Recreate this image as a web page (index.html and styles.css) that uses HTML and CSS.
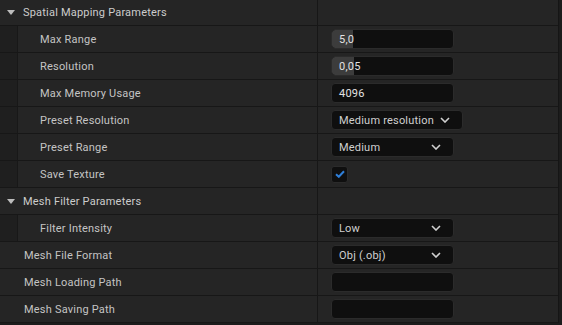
FILE: index.html
```html
<!DOCTYPE html>
<html lang="en">
<head>
  <meta charset="UTF-8" />
  <meta name="viewport" content="width=device-width, initial-scale=1.0"/>
  <title>Details</title>
  <link rel="stylesheet" href="styles.css">
</head>
<body>
  <div class="panel">
    <div class="row category">
      <div class="name"><span class="arrow"></span>Spatial Mapping Parameters</div>
      <div class="value"></div>
    </div>

    <div class="row nested">
      <div class="name"><span class="strip"></span><span class="label">Max Range</span></div>
      <div class="value">
        <div class="field number"><span class="fill" style="width: 21px"></span><span class="text">5,0</span></div>
      </div>
    </div>

    <div class="row nested">
      <div class="name"><span class="strip"></span><span class="label">Resolution</span></div>
      <div class="value">
        <div class="field number"><span class="fill" style="width: 22px"></span><span class="text">0,05</span></div>
      </div>
    </div>

    <div class="row nested">
      <div class="name"><span class="strip"></span><span class="label">Max Memory Usage</span></div>
      <div class="value">
        <div class="field"><span class="text">4096</span></div>
      </div>
    </div>

    <div class="row nested">
      <div class="name"><span class="strip"></span><span class="label">Preset Resolution</span></div>
      <div class="value">
        <div class="field combo"><span class="text">Medium resolution</span><svg class="chevron" width="10" height="6" viewBox="0 0 10 6"><path d="M1 1 L5 5 L9 1" /></svg></div>
      </div>
    </div>

    <div class="row nested">
      <div class="name"><span class="strip"></span><span class="label">Preset Range</span></div>
      <div class="value">
        <div class="field combo"><span class="text">Medium</span><svg class="chevron" width="10" height="6" viewBox="0 0 10 6"><path d="M1 1 L5 5 L9 1" /></svg></div>
      </div>
    </div>

    <div class="row nested">
      <div class="name"><span class="strip"></span><span class="label">Save Texture</span></div>
      <div class="value">
        <div class="checkbox"><svg width="10" height="8" viewBox="0 0 10 8"><path d="M1 4.2 L3.8 6.8 L9 1.2" /></svg></div>
      </div>
    </div>

    <div class="row category">
      <div class="name"><span class="arrow"></span>Mesh Filter Parameters</div>
      <div class="value"></div>
    </div>

    <div class="row nested">
      <div class="name"><span class="strip"></span><span class="label">Filter Intensity</span></div>
      <div class="value">
        <div class="field combo"><span class="text">Low</span><svg class="chevron" width="10" height="6" viewBox="0 0 10 6"><path d="M1 1 L5 5 L9 1" /></svg></div>
      </div>
    </div>

    <div class="row">
      <div class="name"><span class="label">Mesh File Format</span></div>
      <div class="value">
        <div class="field combo"><span class="text">Obj (.obj)</span><svg class="chevron" width="10" height="6" viewBox="0 0 10 6"><path d="M1 1 L5 5 L9 1" /></svg></div>
      </div>
    </div>

    <div class="row">
      <div class="name"><span class="label">Mesh Loading Path</span></div>
      <div class="value">
        <div class="field"><span class="text"></span></div>
      </div>
    </div>

    <div class="row">
      <div class="name"><span class="label">Mesh Saving Path</span></div>
      <div class="value">
        <div class="field"><span class="text"></span></div>
      </div>
    </div>
  </div>
</body>
</html>
```

FILE: styles.css
```css
* {
  margin: 0;
  padding: 0;
  box-sizing: border-box;
}

body {
  font-family: Roboto, 'Noto Sans', sans-serif;
  font-size: 11px;
  letter-spacing: 0.2px;
  color: #c4c4c4;
  background-color: #1c1c1c;
  width: 562px;
  height: 325px;
  overflow: hidden;
}

.panel {
  width: 559px;
  border-right: 1px solid #151515;
  background-color: #252525;
}

.row {
  display: flex;
  height: 27px;
  border-bottom: 1px solid #171717;
}

.row:first-child {
  height: 26px;
}

.name {
  display: flex;
  align-items: center;
  width: 318px;
  border-right: 1px solid #171717;
}

.value {
  flex-grow: 1;
  display: flex;
  align-items: center;
  padding-left: 13px;
}

.category .name {
  padding-left: 7px;
  color: #cccccc;
}

.arrow {
  width: 0;
  height: 0;
  border-left: 4.5px solid transparent;
  border-right: 4.5px solid transparent;
  border-top: 5px solid #bdbdbd;
  margin-right: 8px;
}

.row .label {
  padding-left: 24px;
}

.nested .label {
  padding-left: 22px;
}

.strip {
  align-self: stretch;
  width: 18px;
  background-color: #1f1f1f;
  border-right: 1px solid #181818;
}

.field {
  position: relative;
  display: inline-flex;
  align-items: center;
  min-width: 123px;
  height: 20px;
  padding: 0 12px 0 7px;
  background-color: #0f0f0f;
  border: 1px solid #2b2b2b;
  border-radius: 4px;
  color: #e2e2e2;
  overflow: hidden;
}

.field .text {
  position: relative;
}

.fill {
  position: absolute;
  left: 0;
  top: 0;
  bottom: 0;
  background-color: #3c3c3c;
  border-radius: 3px 0 0 3px;
}

.combo {
  gap: 6px;
  color: #d0d0d0;
}

.chevron {
  margin-left: auto;
  fill: none;
  stroke: #d0d0d0;
  stroke-width: 1.6;
}

.checkbox {
  display: flex;
  align-items: center;
  justify-content: center;
  width: 17px;
  height: 17px;
  background-color: #0f0f0f;
  border: 1px solid #2b2b2b;
  border-radius: 3px;
}

.checkbox svg {
  fill: none;
  stroke: #2f7fd9;
  stroke-width: 2;
}
```
